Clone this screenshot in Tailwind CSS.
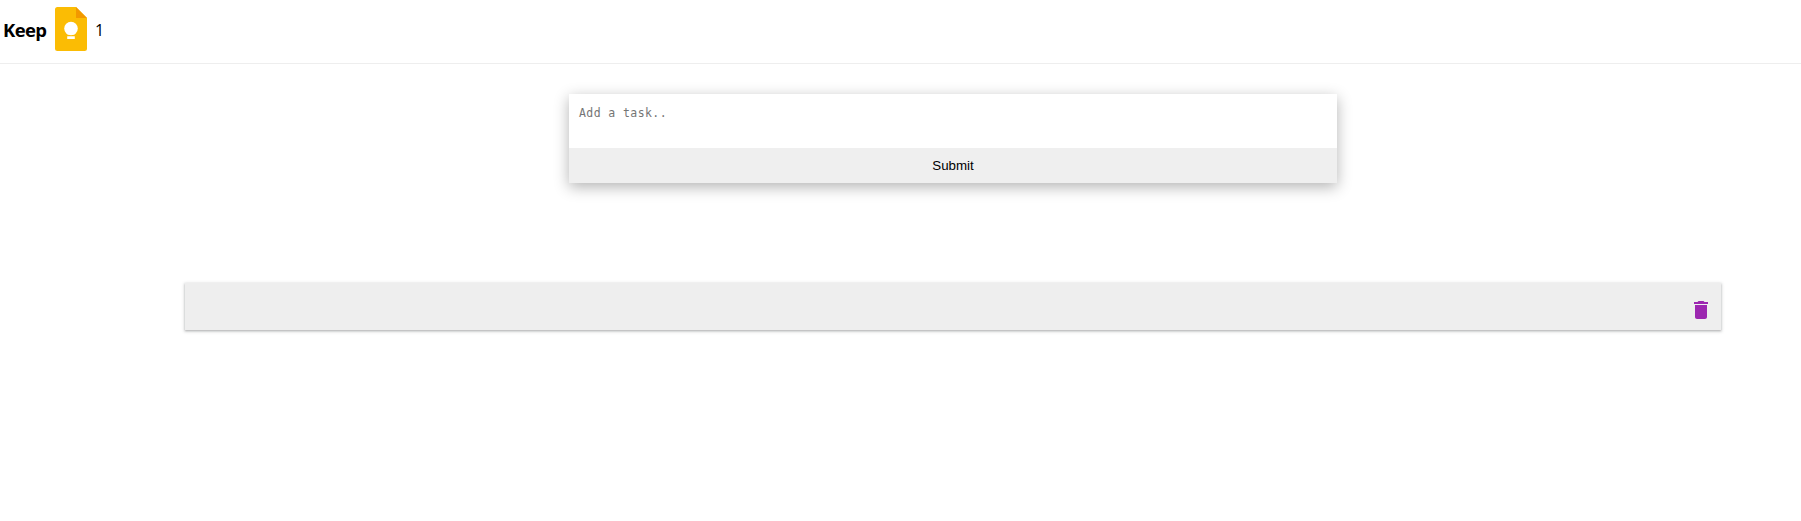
<!DOCTYPE html>
<html lang="en">
<head>
<meta charset="utf-8">
<title>Keep</title>
<script src="https://cdn.jsdelivr.net/npm/@tailwindcss/browser@4"></script>
</head>
<body class="min-h-screen overflow-hidden bg-white font-['Open_Sans',sans-serif] text-black">
<header class="flex h-16 items-start border-b border-[#eee] pl-[3px] pt-[7px]">
  <h1 class="w-[52px] pt-[9px] text-[18.5px] leading-[27px] font-bold tracking-[-0.6px]">Keep</h1>
  <svg class="h-11 w-8 shrink-0" viewBox="0 0 32 44">
    <path fill="#fbbc04" d="M2.5 0H21l11 11v30.5a2.5 2.5 0 0 1-2.5 2.5h-27A2.5 2.5 0 0 1 0 41.5v-39A2.5 2.5 0 0 1 2.5 0z"/>
    <path fill="#f29900" d="M21 0l11 11H21z"/>
    <circle cx="16" cy="21.5" r="6.8" fill="#fff"/>
    <path fill="#fff" d="M12.2 25h7.6v2.6h-7.6zM12.2 29.2h7.6v2.7h-7.6z"/>
  </svg>
  <span class="ml-2 pt-[11px] text-[16px] leading-6">1</span>
</header>
<main class="pl-[185px]">
  <form class="ml-96 mt-[30px] flex h-[89px] w-[768px] flex-col bg-white shadow-[0_4px_14px_rgba(0,0,0,0.3)]">
    <textarea class="block h-[54px] resize-none bg-white px-[10px] pt-[11px] font-['DejaVu_Sans_Mono',monospace] text-[11.5px] leading-4 tracking-[0.41px] placeholder:text-[#757575] outline-none" placeholder="Add a task.."></textarea>
    <button type="button" class="h-[35px] bg-[#efefef] font-['Liberation_Sans',sans-serif] text-[13.333px]">Submit</button>
  </form>
  <article class="mt-[100px] flex h-[47px] w-[1536px] justify-end bg-[#eee] pr-2 pt-[15px] shadow-[0_1px_2px_rgba(60,64,67,0.3),0_1px_3px_1px_rgba(60,64,67,0.15)]">
    <svg class="size-6" viewBox="0 0 24 24" fill="#9c27b0"><path d="M6 19c0 1.1.9 2 2 2h8c1.1 0 2-.9 2-2V7H6v12zM19 4h-3.5l-1-1h-5l-1 1H5v2h14V4z"/></svg>
  </article>
</main>
</body>
</html>
